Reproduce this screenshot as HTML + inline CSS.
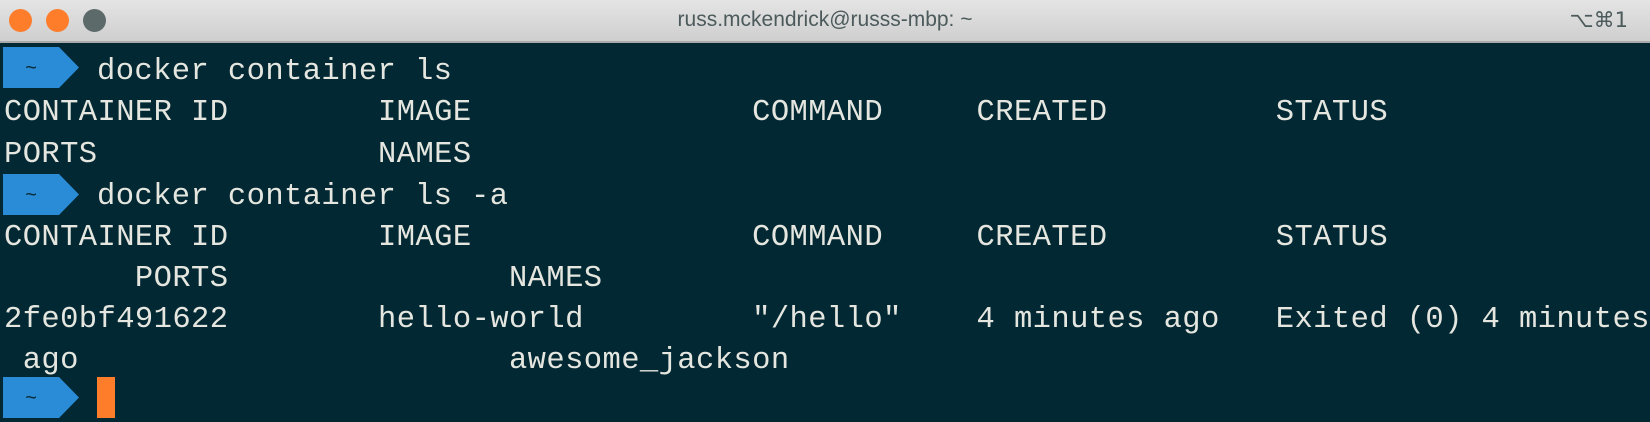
<!DOCTYPE html><html><head><style>
body{margin:0;width:1650px;height:422px;background:#022833;overflow:hidden;font-family:"Liberation Mono","DejaVu Sans Mono",monospace;}
.tb{position:absolute;left:0;top:0;width:1650px;height:41px;background:linear-gradient(#e4e4e4,#cfcfcf);border-bottom:2px solid #a9abab;}
.c{position:absolute;top:9px;width:23px;height:23px;border-radius:50%;}
.t{position:absolute;top:8px;width:100%;text-align:center;font:21px "Liberation Sans",sans-serif;color:#4c5a5c;}
.k{position:absolute;right:22px;top:8px;font:21px "DejaVu Sans",sans-serif;color:#4c5a5c;}
.r{position:absolute;left:4px;height:41px;line-height:43px;font-size:30.5px;letter-spacing:0.4px;color:#e4e6df;white-space:pre;}
.p{position:absolute;left:3px;width:76px;height:41px;}
</style></head><body>
<div class="tb"><div class="c" style="left:9px;background:#fd7d2a"></div><div class="c" style="left:46px;background:#fd7d2a"></div><div class="c" style="left:83px;background:#5c6b6a"></div><div class="t">russ.mckendrick@russs-mbp: ~</div><div class="k">⌥⌘1</div></div>
<svg class="p" style="top:47px" viewBox="0 0 76 41"><polygon points="0,0 56,0 76,20.5 56,41 0,41" fill="#2a8bd6"/><text x="22" y="27" font-size="20" fill="#0a2a35" font-family="Liberation Mono">~</text></svg>
<svg class="p" style="top:174px" viewBox="0 0 76 41"><polygon points="0,0 56,0 76,20.5 56,41 0,41" fill="#2a8bd6"/><text x="22" y="27" font-size="20" fill="#0a2a35" font-family="Liberation Mono">~</text></svg>
<svg class="p" style="top:377px" viewBox="0 0 76 41"><polygon points="0,0 56,0 76,20.5 56,41 0,41" fill="#2a8bd6"/><text x="22" y="27" font-size="20" fill="#0a2a35" font-family="Liberation Mono">~</text></svg>
<div style="position:absolute;left:97px;top:377px;width:18px;height:41px;background:#fd7d2a"></div>
<div class="r" style="top:51px;left:97px">docker container ls</div>
<div class="r" style="top:92px">CONTAINER ID        IMAGE               COMMAND     CREATED         STATUS</div>
<div class="r" style="top:134px">PORTS               NAMES</div>
<div class="r" style="top:176px;left:97px">docker container ls -a</div>
<div class="r" style="top:217px">CONTAINER ID        IMAGE               COMMAND     CREATED         STATUS</div>
<div class="r" style="top:258px">       PORTS               NAMES</div>
<div class="r" style="top:299px">2fe0bf491622        hello-world         "/hello"    4 minutes ago   Exited (0) 4 minutes</div>
<div class="r" style="top:340px"> ago                       awesome_jackson</div>
</body></html>
